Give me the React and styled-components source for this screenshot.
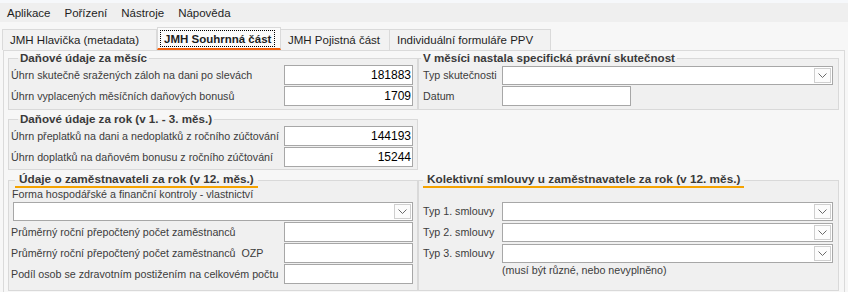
import React from 'react'
import styled, { createGlobalStyle } from 'styled-components'

const GlobalStyle = createGlobalStyle`
  body {
    margin: 0;
    background: #f7f7f7;
    font-family: "Liberation Sans", Arial, sans-serif;
    font-size: 12px;
    color: #3c3c3c;
  }
`

const Window = styled.div`
  width: 848px;
  height: 292px;
  overflow: hidden;
  display: flex;
  flex-direction: column;
  background: #f7f7f7;
`

const MenuBar = styled.div`
  height: 19px;
  border-top: 3px solid #f6f8fb;
  background: #efefef;
  display: flex;
  align-items: center;
  padding-left: 7px;
  gap: 14px;
`

const MenuItem = styled.span`
  color: #1e1e1e;
  font-size: 11.5px;
`

const TabStrip = styled.div`
  height: 28px;
  display: flex;
  align-items: flex-end;
  padding-left: 2px;
`

const Tab = styled.div`
  width: ${p => p.$w}px;
  height: ${p => (p.$active ? 23 : 21)}px;
  box-sizing: border-box;
  display: flex;
  align-items: center;
  padding-left: ${p => (p.$active ? 3 : 7)}px;
  background: ${p => (p.$active ? '#fbfbfb' : '#f2f2f2')};
  border: 1px solid #dadada;
  border-bottom: ${p => (p.$active ? '2px solid #f2600c' : 'none')};
  border-left-width: ${p => (p.$first || p.$active ? 1 : 0)}px;
  color: #1e1e1e;
  font-weight: ${p => (p.$active ? 'bold' : 'normal')};
  font-size: 11.5px;
`

const FocusText = styled.span`
  outline: 1px dotted #000;
  padding: 2px 3px 1px;
`

const Panel = styled.div`
  flex: 1;
  margin: 0 3px;
  border: 1px solid #dadada;
  border-bottom: none;
  padding: 0 0 0 4px;
`

const Layout = styled.div`
  display: grid;
  grid-template-columns: 410px 421px;
  grid-template-rows: auto auto auto;
  row-gap: 2px;
`

const Group = styled.fieldset`
  margin: 0;
  padding: 0 ${p => p.$pr ?? 4}px ${p => p.$pb ?? 3}px ${p => p.$pl ?? 2}px;
  border: 1px solid #d9d9d9;
  background: #f0f0f0;
  min-width: 0;
  grid-column: ${p => p.$col};
  grid-row: ${p => p.$row};
`

const Legend = styled.legend`
  margin-left: ${p => p.$ml ?? 7}px;
  padding: 0 ${p => (p.$marked ? 4 : 2)}px;
  font-weight: bold;
  font-size: ${p => (p.$marked ? 11.8 : 11.6)}px;
  line-height: 14px;
  color: #3a3a3a;
  border-bottom: ${p => (p.$marked ? '2px solid #f5a300' : 'none')};
`

const Row = styled.div`
  display: flex;
  align-items: center;
  justify-content: space-between;
  height: 20px;
  margin-top: ${p => p.$mt ?? 0}px;
  & + & {
    margin-top: 1px;
  }
`

const Label = styled.span`
  font-size: 10.7px;
  color: #3c3c3c;
  white-space: nowrap;
  width: ${p => (p.$w ? `${p.$w}px` : 'auto')};
`

const Field = styled.div`
  box-sizing: border-box;
  width: ${p => p.$w}px;
  height: 20px;
  margin-right: ${p => (p.$left ? 'auto' : '0')};
  background: #fff;
  border: 1px solid #a7a7a7;
  display: flex;
  align-items: center;
  justify-content: flex-end;
  padding-right: 1px;
  color: #000;
  font-size: 12px;
`

const Combo = styled.div`
  box-sizing: border-box;
  width: ${p => p.$w}px;
  height: 19px;
  margin-left: auto;
  background: #fff;
  border: 1px solid #a7a7a7;
  display: flex;
  justify-content: flex-end;
  padding: 1px;
`

const DropButton = styled.div`
  box-sizing: border-box;
  width: 17px;
  height: 100%;
  border: 1px solid #cfcfcf;
  background: #fcfcfc;
  display: flex;
  align-items: center;
  justify-content: center;
`

const StackLabel = styled.div`
  font-size: 10.7px;
  line-height: 13px;
  color: #3c3c3c;
  margin-left: 1px;
`

const Note = styled.div`
  font-size: 10.7px;
  color: #3c3c3c;
  margin: 1px 0 0 79px;
`

const Chevron = () => (
  <svg width="9" height="5" viewBox="0 0 9 5">
    <polyline points="0.5,0.5 4.5,4.5 8.5,0.5" fill="none" stroke="#6a6a6a" strokeWidth="1" />
  </svg>
)

const Select = ({ w }) => (
  <Combo $w={w}>
    <DropButton><Chevron /></DropButton>
  </Combo>
)

export default function App() {
  return (
    <Window>
      <GlobalStyle />
      <MenuBar>
        <MenuItem>Aplikace</MenuItem>
        <MenuItem>Pořízení</MenuItem>
        <MenuItem>Nástroje</MenuItem>
        <MenuItem>Nápověda</MenuItem>
      </MenuBar>
      <TabStrip>
        <Tab $w={155} $first>JMH Hlavička (metadata)</Tab>
        <Tab $w={124} $active><FocusText>JMH Souhrnná část</FocusText></Tab>
        <Tab $w={109}>JMH Pojistná část</Tab>
        <Tab $w={161}>Individuální formuláře PPV</Tab>
      </TabStrip>
      <Panel>
        <Layout>
          <Group $col={1} $row={1}>
            <Legend>Daňové údaje za měsíc</Legend>
            <Row>
              <Label>Úhrn skutečně sražených záloh na dani po slevách</Label>
              <Field $w={129}>181883</Field>
            </Row>
            <Row>
              <Label>Úhrn vyplacených měsíčních daňových bonusů</Label>
              <Field $w={129}>1709</Field>
            </Row>
          </Group>

          <Group $col={2} $row={1} $pl={4} $pr={5}>
            <Legend $ml={-2}>V měsíci nastala specifická právní skutečnost</Legend>
            <Row>
              <Label $w={79}>Typ skutečnosti</Label>
              <Select w={331} />
            </Row>
            <Row>
              <Label $w={79}>Datum</Label>
              <Field $w={129} $left />
            </Row>
          </Group>

          <Group $col={1} $row={2} $pb={2}>
            <Legend>Daňové údaje za rok (v 1. - 3. měs.)</Legend>
            <Row>
              <Label>Úhrn přeplatků na dani a nedoplatků z ročního zúčtování</Label>
              <Field $w={129}>144193</Field>
            </Row>
            <Row>
              <Label>Úhrn doplatků na daňovém bonusu z ročního zúčtování</Label>
              <Field $w={129}>15244</Field>
            </Row>
          </Group>

          <Group $col={1} $row={3} $pb={6}>
            <Legend $marked $ml={4}>Údaje o zaměstnavateli za rok (v 12. měs.)</Legend>
            <StackLabel>Forma hospodářské a finanční kontroly - vlastnictví</StackLabel>
            <Row>
              <Select w={400} />
            </Row>
            <Row>
              <Label>Průměrný roční přepočtený počet zaměstnanců</Label>
              <Field $w={129} />
            </Row>
            <Row>
              <Label>Průměrný roční přepočtený počet zaměstnanců&nbsp;&nbsp;OZP</Label>
              <Field $w={129} />
            </Row>
            <Row>
              <Label>Podíl osob se zdravotním postižením na celkovém počtu</Label>
              <Field $w={129} />
            </Row>
          </Group>

          <Group $col={2} $row={3} $pl={4} $pr={5} $pb={6}>
            <Legend $marked $ml={0}>Kolektivní smlouvy u zaměstnavatele za rok (v 12. měs.)</Legend>
            <Row $mt={13}>
              <Label $w={79}>Typ 1. smlouvy</Label>
              <Select w={331} />
            </Row>
            <Row>
              <Label $w={79}>Typ 2. smlouvy</Label>
              <Select w={331} />
            </Row>
            <Row>
              <Label $w={79}>Typ 3. smlouvy</Label>
              <Select w={331} />
            </Row>
            <Note>(musí být různé, nebo nevyplněno)</Note>
          </Group>
        </Layout>
      </Panel>
    </Window>
  )
}
